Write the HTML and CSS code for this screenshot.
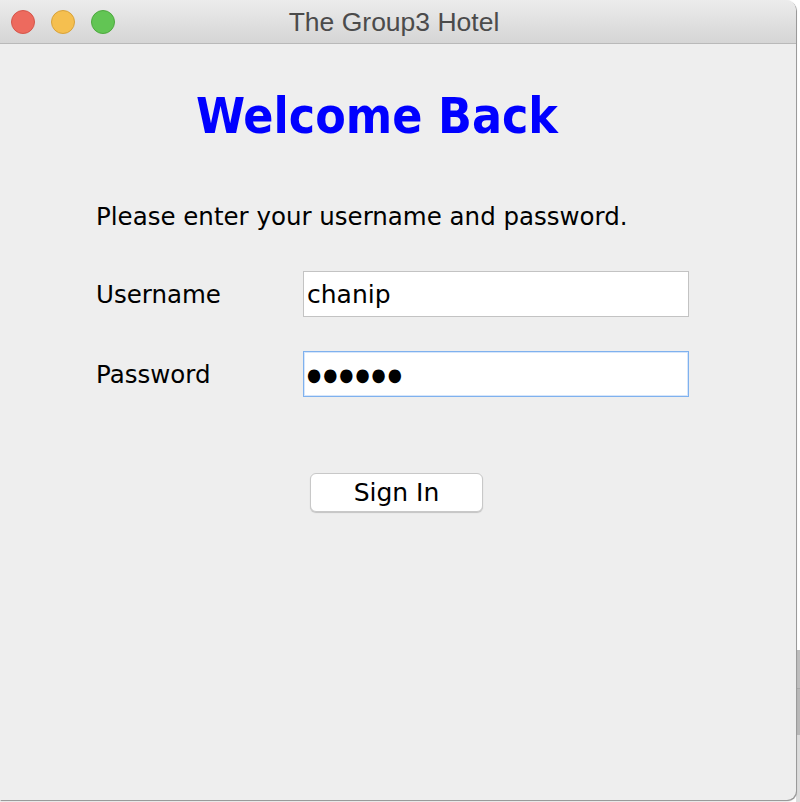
FILE: index.html
```html
<!DOCTYPE html>
<html>
<head>
<meta charset="utf-8">
<link rel="stylesheet" href="styles.css">
</head>
<body>
<div class="desk">
  <div class="window">
    <div class="titlebar">
      <div class="lights">
        <span class="light red"></span>
        <span class="light yellow"></span>
        <span class="light green"></span>
      </div>
      <div class="title">The Group3 Hotel</div>
    </div>
    <div class="content">
      <h1 class="heading">Welcome Back</h1>
      <p class="intro">Please enter your username and password.</p>
      <div class="form">
        <label class="label">Username</label>
        <div class="field">chanip</div>
        <label class="label">Password</label>
        <div class="field focused"><span class="dots">●●●●●●</span></div>
      </div>
      <div class="actions">
        <button class="btn">Sign In</button>
      </div>
    </div>
  </div>
  <div class="edge">
    <div class="edge-top"></div>
    <div class="edge-mid"></div>
    <div class="edge-low"></div>
    <div class="edge-bottom"></div>
  </div>
</div>
</body>
</html>
```

FILE: styles.css
```css
html, body {
  margin: 0;
  padding: 0;
  background: #ffffff;
}
.desk {
  display: flex;
  width: 800px;
  height: 802px;
}
.window {
  width: 796px;
  height: 800px;
  background: #eeeeee;
  border-radius: 0 10px 9px 0;
  box-shadow: 1px 1px 0 #9a9a9a, 0 1px 2px rgba(0,0,0,0.35);
  display: flex;
  flex-direction: column;
  overflow: hidden;
  position: relative;
  z-index: 1;
}
.titlebar {
  height: 43px;
  border-bottom: 1px solid #b9b9b9;
  background: linear-gradient(#ececec, #d5d5d5);
  display: flex;
  align-items: center;
  position: relative;
  border-radius: 0 10px 0 0;
}
.lights {
  display: flex;
  gap: 16px;
  padding-left: 11px;
}
.light {
  width: 24px;
  height: 24px;
  border-radius: 50%;
  box-sizing: border-box;
}
.red { background: #ed6a5e; border: 1px solid #d5564a; }
.yellow { background: #f5bf4f; border: 1px solid #d8a23a; }
.green { background: #62c554; border: 1px solid #4ea93f; }
.title {
  position: absolute;
  left: 0;
  right: 0;
  top: 0;
  bottom: 0;
  display: flex;
  align-items: center;
  justify-content: center;
  font-family: "Liberation Sans", Arial, sans-serif;
  font-size: 26.5px;
  color: #4b4b4b;
  padding-top: 1px;
  padding-right: 8px;
  pointer-events: none;
}
.content {
  flex: 1;
  font-family: "DejaVu Sans", sans-serif;
  color: #000;
}
.heading {
  margin: 44px 0 0 196px;
  font-size: 49.5px;
  font-weight: bold;
  color: #0000ff;
  line-height: 56px;
  font-stretch: condensed;
}
.intro {
  margin: 58px 0 0 96px;
  font-size: 24.5px;
  line-height: 30px;
}
.form {
  margin: 39px 0 0 96px;
  display: grid;
  grid-template-columns: 207px 386px;
  row-gap: 34px;
  align-items: center;
}
.label {
  font-size: 24.5px;
}
.field {
  height: 46px;
  box-sizing: border-box;
  background: #fff;
  border: 1px solid #c3c3c3;
  display: flex;
  align-items: center;
  padding-left: 3px;
  font-size: 25px;
}
.field.focused {
  border-color: #7fb1ee;
  box-shadow: inset 0 0 0 1px #d6e6fb;
}
.dots {
  font-size: 18px;
  letter-spacing: 2px;
  font-stretch: condensed;
}
.actions {
  margin: 76px 0 0 310px;
}
.btn {
  width: 173px;
  height: 39px;
  background: #ffffff;
  border: 1px solid #c8c8c8;
  border-radius: 6px;
  box-shadow: 0 1px 1px rgba(0,0,0,0.18);
  font-family: "DejaVu Sans", sans-serif;
  font-size: 25px;
  color: #000;
  padding: 0;
  line-height: 37px;
}
.edge {
  width: 4px;
  height: 802px;
  display: flex;
  flex-direction: column;
}
.edge-top { height: 650px; background: #ffffff; }
.edge-mid { height: 38px; background: #bdbdbd; border-bottom: 1px solid #a9a9a9; }
.edge-low { height: 46px; background: #b8b8b8; }
.edge-bottom { flex: 1; background: #dcdcdc; }
```
